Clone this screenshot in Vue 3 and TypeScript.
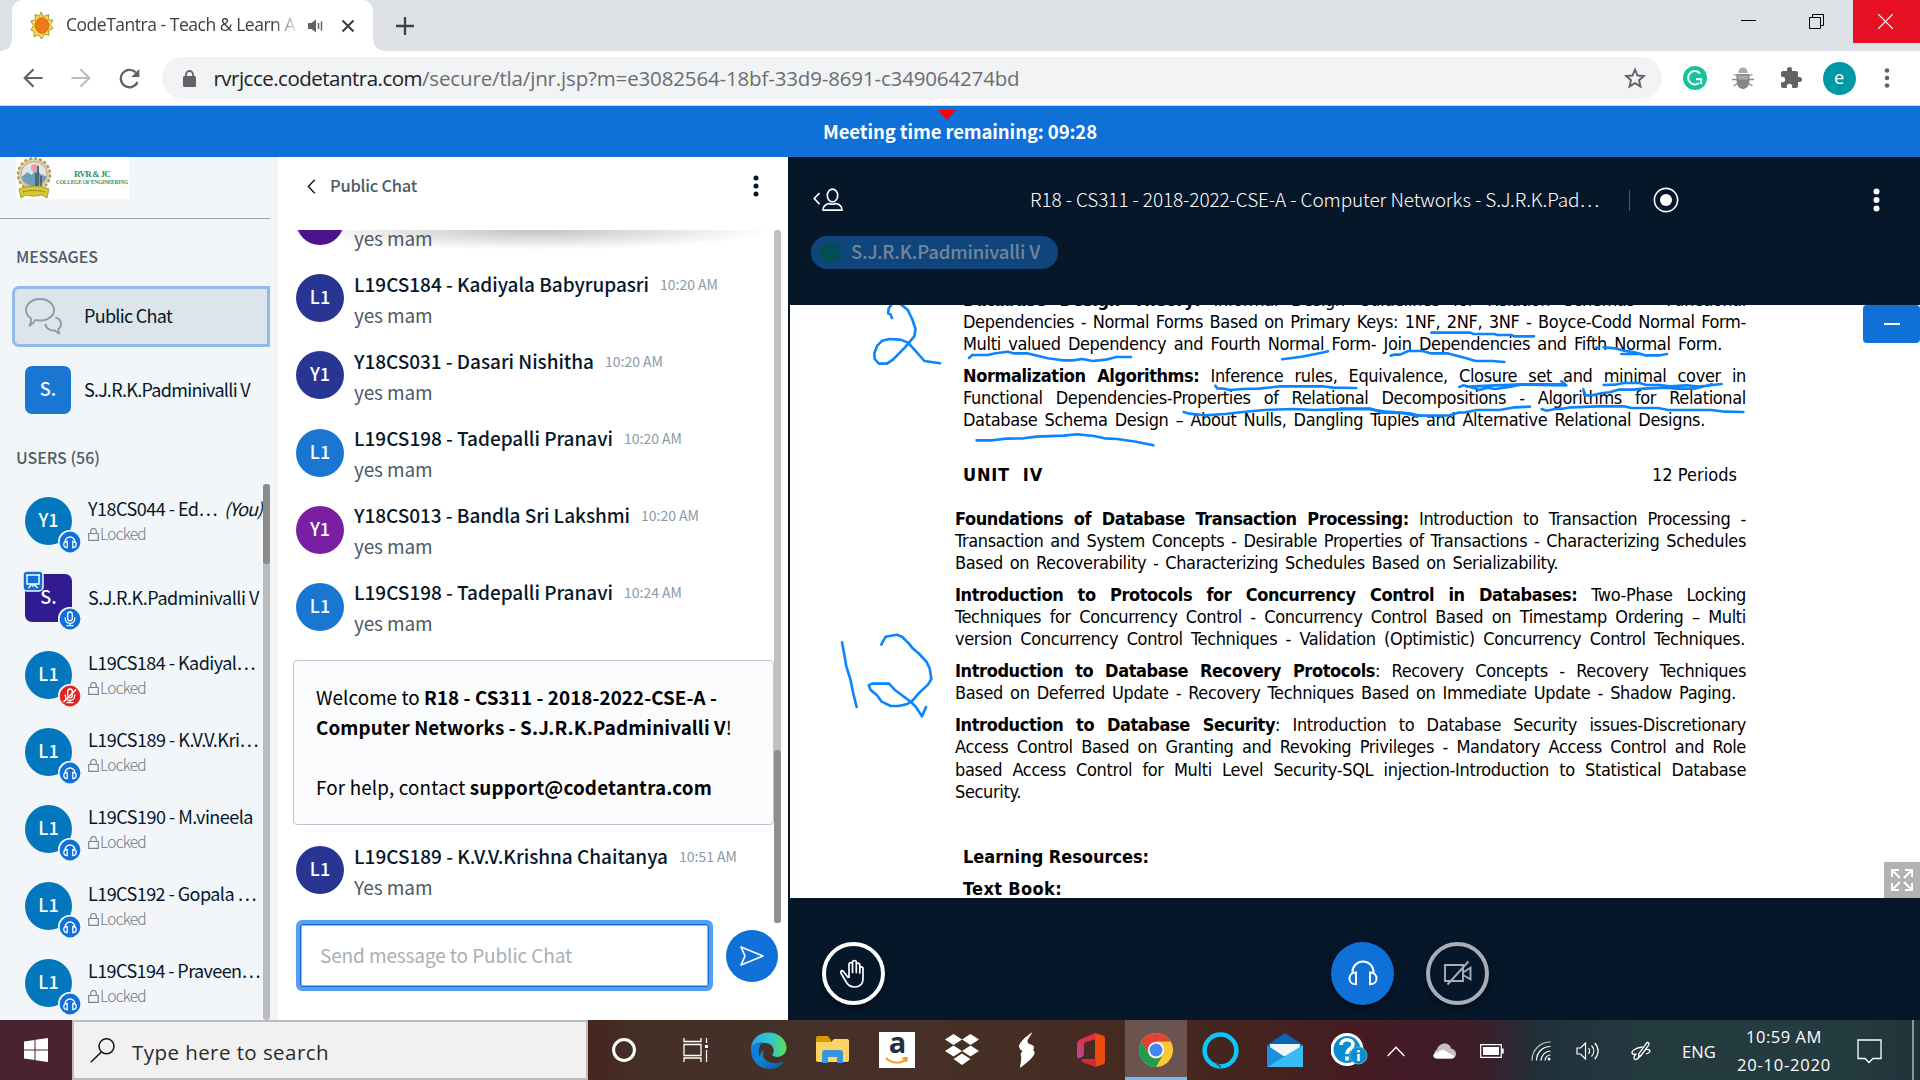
<script setup lang="ts">
interface User { initials: string; name: string; width: number; you?: boolean; square?: boolean; locked: boolean; status: 'headset' | 'mic' | 'muted' }
interface Message { initials: string; color: string; name: string; width: number; time: string; text: string }
interface Segment { t: string; b?: boolean }
interface DocLine { segs: Segment[]; width: number }

/* Spreads letters so a label takes the given width whatever face is installed. */
const vFit = {
  mounted(el: HTMLElement, binding: { value: number }) {
    const n = (el.textContent || '').trim().length
    const w = el.getBoundingClientRect().width
    const base = parseFloat(getComputedStyle(el).letterSpacing) || 0
    if (n && binding.value) el.style.letterSpacing = (base + (binding.value - w) / n).toFixed(4) + 'px'
  },
}
/* Justifies one document line through its word gaps. */
const vJustify = {
  mounted(el: HTMLElement, binding: { value: number }) {
    const gaps = (el.textContent || '').trim().split(' ').length - 1
    const w = el.getBoundingClientRect().width
    if (gaps > 0) el.style.wordSpacing = ((binding.value - w) / gaps).toFixed(4) + 'px'
  },
}

const users: User[] = [
  { initials: 'Y1', name: 'Y18CS044 - Ed…', width: 129, you: true, locked: true, status: 'headset' },
  { initials: 'S.', name: 'S.J.R.K.Padminivalli V', width: 171, square: true, locked: false, status: 'mic' },
  { initials: 'L1', name: 'L19CS184 - Kadiyal…', width: 167, locked: true, status: 'muted' },
  { initials: 'L1', name: 'L19CS189 - K.V.V.Kri…', width: 170, locked: true, status: 'headset' },
  { initials: 'L1', name: 'L19CS190 - M.vineela', width: 165, locked: true, status: 'headset' },
  { initials: 'L1', name: 'L19CS192 - Gopala …', width: 168, locked: true, status: 'headset' },
  { initials: 'L1', name: 'L19CS194 - Praveen…', width: 172, locked: true, status: 'headset' },
]

const messages: Message[] = [
  { initials: '', color: '#4a148c', name: '', width: 0, time: '', text: 'yes mam' },
  { initials: 'L1', color: '#283593', name: 'L19CS184 - Kadiyala Babyrupasri', width: 295, time: '10:20 AM', text: 'yes mam' },
  { initials: 'Y1', color: '#283593', name: 'Y18CS031 - Dasari Nishitha', width: 240, time: '10:20 AM', text: 'yes mam' },
  { initials: 'L1', color: '#1976d2', name: 'L19CS198 - Tadepalli Pranavi', width: 259, time: '10:20 AM', text: 'yes mam' },
  { initials: 'Y1', color: '#7b1fa2', name: 'Y18CS013 - Bandla Sri Lakshmi', width: 276, time: '10:20 AM', text: 'yes mam' },
  { initials: 'L1', color: '#1976d2', name: 'L19CS198 - Tadepalli Pranavi', width: 259, time: '10:24 AM', text: 'yes mam' },
]
const lastMessage: Message = { initials: 'L1', color: '#283593', name: 'L19CS189 - K.V.V.Krishna Chaitanya', width: 314, time: '10:51 AM', text: 'Yes mam' }

const line = (width: number, t: string, bold = ''): DocLine => ({ width, segs: bold ? [{ t: bold, b: true }, { t }] : [{ t }] })

const unitThree: DocLine[][] = [
  [
    line(783, ' Informal Design Guidelines for Relation Schemas - Functional', 'Database Design Theory:'),
    line(783, 'Dependencies - Normal Forms Based on Primary Keys: 1NF, 2NF, 3NF - Boyce-Codd Normal Form-'),
    line(759, 'Multi valued Dependency and Fourth Normal Form- Join Dependencies and Fifth Normal Form.'),
  ],
  [
    line(783, ' Inference rules, Equivalence, Closure set and minimal cover in', 'Normalization Algorithms:'),
    line(783, 'Functional Dependencies-Properties of Relational Decompositions - Algorithms for Relational'),
    line(742, 'Database Schema Design – About Nulls, Dangling Tuples and Alternative Relational Designs.'),
  ],
]
const unitFour: DocLine[][] = [
  [
    line(791, ' Introduction to Transaction Processing -', 'Foundations of Database Transaction Processing:'),
    line(791, 'Transaction and System Concepts - Desirable Properties of Transactions - Characterizing Schedules'),
    line(603, 'Based on Recoverability - Characterizing Schedules Based on Serializability.'),
  ],
  [
    line(791, ' Two-Phase Locking', 'Introduction to Protocols for Concurrency Control in Databases:'),
    line(791, 'Techniques for Concurrency Control - Concurrency Control Based on Timestamp Ordering – Multi'),
    line(790, 'version Concurrency Control Techniques - Validation (Optimistic) Concurrency Control Techniques.'),
  ],
  [
    line(791, ': Recovery Concepts - Recovery Techniques', 'Introduction to Database Recovery Protocols'),
    line(781, 'Based on Deferred Update - Recovery Techniques Based on Immediate Update - Shadow Paging.'),
  ],
  [
    line(791, ': Introduction to Database Security issues-Discretionary', 'Introduction to Database Security'),
    line(791, 'Access Control Based on Granting and Revoking Privileges - Mandatory Access Control and Role'),
    line(791, 'based Access Control for Multi Level Security-SQL injection-Introduction to Statistical Database'),
    line(69, 'Security.'),
  ],
]
</script>

<template>
  <div class="screen">
    <header class="tabstrip">
      <div class="tab">
        <svg class="favicon" width="24" height="30" viewBox="0 0 24 30">
          <path d="M11 1l2.600 4.500 5-2-.3 5.200 4.700.5-2.700 4.400 2.700 4-4.500 1.600.5 5-4.800-1-2.500 4.800-3.200-4.300-4.500 2 .2-5.200L1 19l2.500-4.300L.8 10l4.700-1.200L5 3.500l4.500 1.700z" fill="#f4dd55" stroke="#a88a1c" stroke-width=".9" />
          <ellipse cx="12" cy="14.500" rx="6.800" ry="7.800" fill="#ee7a17" stroke="#c9620e" stroke-width=".8" />
        </svg>
        <div class="tab-title"><span v-fit="229">CodeTantra - Teach &amp; Learn A</span></div>
        <svg class="sound" width="16" height="16" viewBox="0 0 16 16"><path d="M0 5h3.500L8 1.500v13L3.500 11H0z" fill="#5f6368" /><path d="M10.500 5v6M13.500 3.500v9" stroke="#5f6368" stroke-width="1.500" /></svg>
        <svg class="tab-close" width="14" height="14" viewBox="0 0 14 14"><path d="M1.500 1.500l11 11M12.500 1.500l-11 11" stroke="#3c4043" stroke-width="2.100" /></svg>
      </div>
      <svg class="plus" width="18" height="18" viewBox="0 0 18 18"><path d="M9 0v18M0 9h18" stroke="#3c4043" stroke-width="2.300" /></svg>
      <div class="win-controls">
        <svg width="15" height="15" viewBox="0 0 15 15"><path d="M0 6.500h15" stroke="#000" /></svg>
        <svg width="15" height="15" viewBox="0 0 15 15"><path d="M.5 3.500h11v11H.5zM3.500 3V.5h11v11H12" fill="none" stroke="#000" /></svg>
        <div class="win-close"><svg width="15" height="15" viewBox="0 0 15 15"><path d="M0 0l15 15M15 0L0 15" stroke="#fff" stroke-width="1.200" /></svg></div>
      </div>
    </header>

    <div class="toolbar">
      <svg class="nav-icon" width="20" height="20" viewBox="0 0 20 20"><path d="M19.500 10H2M10.500 1.300L1.800 10l8.700 8.700" fill="none" stroke="#5f6368" stroke-width="2.200" /></svg>
      <svg class="nav-icon" width="20" height="20" viewBox="0 0 20 20"><path d="M.5 10H18M9.500 1.300l8.700 8.700-8.700 8.700" fill="none" stroke="#babcbe" stroke-width="2.200" /></svg>
      <svg class="nav-icon reload" width="21" height="21" viewBox="0 0 21 21"><path d="M18.500 14A8.700 8.700 0 1 1 16.800 4.500" fill="none" stroke="#5f6368" stroke-width="2.300" /><path d="M20.300 1v8h-8z" fill="#5f6368" /></svg>
      <div class="omnibox">
        <svg width="13" height="17" viewBox="0 0 13 17"><rect y="6" width="13" height="11" rx="1.500" fill="#5f6368" /><path d="M3 7V4.500a3.500 3.500 0 0 1 7 0V7" fill="none" stroke="#5f6368" stroke-width="1.800" /></svg>
        <div class="url"><span v-fit="208.500" class="host">rvrjcce.codetantra.com</span><span v-fit="597.500">/secure/tla/jnr.jsp?m=e3082564-18bf-33d9-8691-c349064274bd</span></div>
        <svg class="star" width="22" height="22" viewBox="0 0 22 22"><path d="M11 2.600l2.500 5.900 6.400.5-4.900 4.200 1.500 6.200L11 16.100l-5.500 3.300L7 13.200 2.100 9l6.400-.5z" fill="none" stroke="#5f6368" stroke-width="1.900" /></svg>
      </div>
      <div class="extensions">
        <svg width="24" height="24" viewBox="0 0 24 24"><circle cx="12" cy="12" r="12" fill="#15c39a" /><path d="M17 7.500A6.700 6.700 0 1 0 16 17M13 13.300h5.200v5" fill="none" stroke="#fff" stroke-width="2" /></svg>
        <svg width="22" height="22" viewBox="0 0 22 22">
          <g fill="none" stroke="#8c8c8c" stroke-width="1.300"><path d="M6 9L1.500 7.500M6 12.500H0M6 16l-4.500 3M16 9l4.500-1.500M16 12.500h6M16 16l4.500 3" /></g>
          <path d="M6.500 5a4.500 4.500 0 0 1 9 0v1h-9z" fill="#aaa" /><path d="M4.500 7h13v6c0 5-2.500 9-6.500 9s-6.500-4-6.500-9z" fill="#858585" /><path d="M6 8.500h10v4H6z" fill="#a8a8a8" />
        </svg>
        <svg width="24" height="24" viewBox="0 0 24 24"><path d="M20.500 11H19V7c0-1.100-.9-2-2-2h-4V3.500a2.500 2.500 0 0 0-5 0V5H4c-1.100 0-2 .9-2 2v3.800h1.500a2.700 2.700 0 0 1 0 5.400H2V20c0 1.100.9 2 2 2h3.800v-1.500a2.700 2.700 0 0 1 5.400 0V22H17c1.100 0 2-.9 2-2v-4h1.500a2.500 2.500 0 0 0 0-5z" fill="#5f6368" /></svg>
        <div class="profile">e</div>
        <svg width="6" height="22" viewBox="0 0 6 22"><g fill="#5f6368"><circle cx="3" cy="3.500" r="2.300" /><circle cx="3" cy="11" r="2.300" /><circle cx="3" cy="18.500" r="2.300" /></g></svg>
      </div>
    </div>

    <div class="meeting-bar">
      <svg class="marker" width="18" height="10" viewBox="0 0 18 10"><path d="M0 0h18L9 10z" fill="#f00" /></svg>
      <span v-fit="274">Meeting time remaining: 09:28</span>
    </div>

    <main class="app">
      <aside class="sidebar">
        <div class="logo">
          <svg width="36" height="42" viewBox="0 0 36 42">
            <circle cx="18" cy="17.500" r="16" fill="#e6d5ab" stroke="#b39a62" stroke-width="2.500" stroke-dasharray="3 2" />
            <circle cx="18" cy="17.500" r="13" fill="#dce7ea" stroke="#b99f72" />
            <path d="M5.500 20l6-5 4 3 5-6 4 5 6 2.500a13 13 0 0 1-25 .5z" fill="#6f9fb8" />
            <circle cx="19" cy="11" r="4" fill="#eba0a0" /><path d="M22 9v20M20 29V16M25 29V19" stroke="#52606a" stroke-width="1.800" />
            <path d="M3 32c10-4 20-4 30 0l-2 9-5-3c-5 1.500-11 1.500-16 0l-5 3z" fill="#d6c92f" stroke="#8e841a" stroke-width=".7" />
            <path d="M7 35c7-2 15-2 22 0" stroke="#6f6916" fill="none" stroke-dasharray="1.500 1" />
          </svg>
          <div class="logo-text"><div class="l1"><span v-fit="36">RVR &amp; JC</span></div><div class="l2"><span v-fit="72">COLLEGE OF ENGINEERING</span></div></div>
        </div>
        <div class="rule"></div>
        <h2 class="messages-title"><span v-fit="82">MESSAGES</span></h2>
        <div class="public-chat">
          <svg width="37" height="37" viewBox="0 0 37 37"><g fill="none" stroke="#8b9aa8" stroke-width="1.900" stroke-linejoin="round"><path d="M6 20.500C2.800 18 1 15.300 1 12 1 6 7 1 15 1s14 5 14 11-6 10.500-14 10.500c-1.700 0-3-.2-4.500-.6C9 24.500 7 26.500 4.500 27.500 6 25.500 6.300 23 6 20.500z" /><path d="M30.500 19.500c3.500 1 5.500 3.500 5.500 6.500 0 2-1 4-2.800 5.300 0 1.700.4 3 1.300 4.200-2-.5-3.500-1.700-4.500-3-5 .8-9.500-2.500-9.500-6.500" /></g></svg>
          <span v-fit="88">Public Chat</span>
        </div>
        <div class="private-chat"><div class="avatar square blue">S.</div><span v-fit="166">S.J.R.K.Padminivalli V</span></div>
        <h2 class="users-title"><span v-fit="84">USERS (56)</span></h2>
        <div class="user-list">
          <div class="users">
            <div v-for="(u, i) in users" :key="i" class="user">
              <div class="avatar" :class="{ square: u.square, violet: u.square }">
                {{ u.initials }}
                <svg v-if="u.square" class="presenter" width="22" height="22" viewBox="0 0 22 22"><rect x="1" y="1" width="20" height="20" rx="4" fill="#0f70d7" stroke="#f3f6f9" stroke-width="1.500" /><g fill="none" stroke="#fff" stroke-width="1.400"><path d="M4 5h14M5 5v9h12V5M11 14v3M6.500 18l3-3.500M15.500 18l-3-3.500" /></g></svg>
                <svg class="status" width="24" height="24" viewBox="0 0 24 24">
                  <circle cx="12" cy="12" r="11.300" :fill="u.status === 'muted' ? '#df2721' : '#0f70d7'" stroke="#f3f6f9" stroke-width="1.800" />
                  <g fill="none" stroke="#fff" stroke-width="1.300">
                    <path v-if="u.status === 'headset'" d="M7 12.500V12a5 5 0 0 1 10 0v.5M9.200 11.500v6c-2 0-3.400-1.300-3.400-3s1.400-3 3.400-3zM14.800 11.500v6c2 0 3.400-1.300 3.400-3s-1.400-3-3.400-3z" />
                    <path v-else d="M12 5a2.300 2.300 0 0 0-2.300 2.300v4.200a2.300 2.300 0 0 0 4.600 0V7.300A2.300 2.300 0 0 0 12 5zM7.300 10.500v1.200a4.700 4.700 0 0 0 9.400 0v-1.200M12 16.400v2.300M8.500 18.700h7" />
                    <path v-if="u.status === 'muted'" d="M5.500 18L18 5.500" stroke-width="1.600" />
                  </g>
                </svg>
              </div>
              <div class="user-info">
                <div class="user-name"><span v-fit="u.width">{{ u.name }}</span><i v-if="u.you"><span v-fit="38">(You)</span></i></div>
                <div v-if="u.locked" class="locked"><svg width="11" height="13" viewBox="0 0 11 13"><path d="M.7 5.500h9.600v6.800H.7zM2.700 5.500V3.300a2.800 2.800 0 0 1 5.600 0v2.200" fill="none" stroke="#7a8792" stroke-width="1.200" /></svg><span v-fit="46">Locked</span></div>
              </div>
            </div>
          </div>
          <div class="scrollbar"><div class="thumb"></div></div>
        </div>
      </aside>

      <section class="chat">
        <div class="chat-head">
          <svg width="9" height="15" viewBox="0 0 9 15"><path d="M7.800 .8L1.300 7.500l6.500 6.700" fill="none" stroke="#06172a" stroke-width="1.400" /></svg>
          <span v-fit="87" class="chat-title">Public Chat</span>
          <svg class="chat-menu" width="6" height="22" viewBox="0 0 6 22"><g fill="#06172a"><circle cx="3" cy="3" r="2.500" /><circle cx="3" cy="11" r="2.500" /><circle cx="3" cy="19" r="2.500" /></g></svg>
        </div>
        <div class="chat-body">
          <div class="message-list">
            <div v-for="(m, i) in messages" :key="i" class="message">
              <div class="avatar" :style="{ background: m.color }">{{ m.initials }}</div>
              <div class="message-text">
                <div class="message-head"><span v-fit="m.width">{{ m.name }}</span><time v-if="m.time"><span v-fit="58">{{ m.time }}</span></time></div>
                <div class="message-body"><span v-fit="78.500">{{ m.text }}</span></div>
              </div>
            </div>
            <div class="welcome">
              <div><span v-fit="401">Welcome to <b>R18 - CS311 - 2018-2022-CSE-A -</b></span></div>
              <div><span v-fit="416"><b>Computer Networks - S.J.R.K.Padminivalli V</b>!</span></div>
              <div>&nbsp;</div>
              <div><span v-fit="396">For help, contact <b>support@codetantra.com</b></span></div>
            </div>
            <div class="message">
              <div class="avatar" :style="{ background: lastMessage.color }">{{ lastMessage.initials }}</div>
              <div class="message-text">
                <div class="message-head"><span v-fit="lastMessage.width">{{ lastMessage.name }}</span><time><span v-fit="58">{{ lastMessage.time }}</span></time></div>
                <div class="message-body"><span v-fit="78.500">{{ lastMessage.text }}</span></div>
              </div>
            </div>
          </div>
          <div class="scrollbar"><div class="thumb"></div></div>
        </div>
        <div class="composer">
          <div class="input"><span v-fit="252">Send message to Public Chat</span></div>
          <div class="send"><svg width="24" height="20" viewBox="0 0 24 20"><path d="M1 1l22 9L1 19l4-9z" fill="none" stroke="#fff" stroke-width="1.700" stroke-linejoin="round" /></svg></div>
        </div>
      </section>

      <section class="stage">
        <div class="stage-head">
          <svg class="toggle" width="31" height="24" viewBox="0 0 31 24"><g fill="none" stroke="#fff" stroke-width="1.700"><path d="M6.500 5L1.300 10.500l5.200 5.800" /><ellipse cx="19.500" cy="7.500" rx="5.200" ry="6.300" /><path d="M10 22.200c0-4.200 3-6.200 6.500-6.700 2 1 4 1 6 0 3.500.5 6.500 2.500 6.500 6.700z" /></g></svg>
          <div class="stage-title"><span v-fit="569">R18 - CS311 - 2018-2022-CSE-A - Computer Networks - S.J.R.K.Pad…</span></div>
          <div class="divider"></div>
          <svg class="record" width="26" height="26" viewBox="0 0 26 26"><circle cx="13" cy="13" r="11.600" fill="none" stroke="#fff" stroke-width="1.600" /><circle cx="13" cy="13" r="6" fill="#fff" /></svg>
          <svg class="stage-menu" width="7" height="24" viewBox="0 0 7 24"><g fill="#fff"><circle cx="3.500" cy="3.500" r="3" /><circle cx="3.500" cy="12" r="3" /><circle cx="3.500" cy="20.500" r="3" /></g></svg>
        </div>
        <div class="talking"><div class="talk-dot"></div><span v-fit="189">S.J.R.K.Padminivalli V</span></div>

        <div class="presentation">
          <div class="unit-three">
            <div v-for="(p, i) in unitThree" :key="i" class="para"><div v-for="(l, j) in p" :key="j" class="doc-line"><span v-justify="l.width"><template v-for="(s, k) in l.segs" :key="k"><b v-if="s.b">{{ s.t }}</b><template v-else>{{ s.t }}</template></template></span></div></div>
          </div>
          <div class="unit-title"><b v-fit="80">UNIT&nbsp; IV</b><span v-fit="85">12 Periods</span></div>
          <div class="unit-four">
            <div v-for="(p, i) in unitFour" :key="i" class="para"><div v-for="(l, j) in p" :key="j" class="doc-line"><span v-justify="l.width"><template v-for="(s, k) in l.segs" :key="k"><b v-if="s.b">{{ s.t }}</b><template v-else>{{ s.t }}</template></template></span></div></div>
          </div>
          <div class="resources"><div class="doc-line"><b v-fit="186">Learning Resources:</b></div><div class="doc-line text-book"><b v-fit="99">Text Book:</b></div></div>

          <svg class="ink" width="1130" height="593" viewBox="790 305 1130 593">
            <g transform="translate(780 100) scale(.42092 .33333)">
              <path d="M266 654l-3-10-6-4 1-14 7-13M288 614l15 15 11 28 8 30-3 22-22 33-28 36-15 13h-19l-10-14-1-17 7-23 12-15 17-5 26 2 18 9 18 25 21 30 37 7" />
              <path d="M449 774l8-9h36l19-5 29-5 13 5h33l20 6 29 9 36 6h25l21-4 25 6 31-4 25-8h35" />
              <path d="M1193 778l46-8 45-11 18-5" />
              <path d="M1034 857l5 8 16 1 14 4 30-3 40-1 50-7h100l25 4 55 1" />
              <path d="M959 936l14 5 35 5 50-4 42-6 50-6 70-3 50 3 50-2 80-1 40 8 56 5 28 8" />
              <path d="M467 1021h38l32-5 42-1 30-5 65-3 32-4 40 5 25 7 30 2 45 8 41 11" />
            </g>
            <g transform="translate(1340 290) scale(.33333)">
              <path d="M274 128h117l9 4h63l9 3h42l9 4h59M152 197l9-3h19l25-11h42l25 7h50l34 9 23 6 28 8h50l36 3" />
              <path d="M769 173h7M791 172l34 3 28 7 27 4 23 6h-59M903 192l12 4h45l21-4" />
              <path d="M358 291l12-5 34 9 14 5 24-7 23 4 47-7 30-6 60 1 77 1-15-12M380 290l160-7h125" stroke-width="3.600" />
              <path d="M791 285l35-1 25-5h48l20 6h40l31 4 50-3 35 4 70-8M730 298l4 16 15 3 35-7 25-3 26-8h45l30-3 70-3 28 3h55l53-13" />
              <path d="M0 356h92l35 12 60 1 42 8 100-1 25-8 22-1 35-7h68l45-8 46-2M605 357l15 5 25-5 22-1 25-4 80-3h80l22 5h80l31 6h130l40 5 55 1" />
            </g>
            <g transform="translate(780 600) scale(.33333)">
              <path d="M186 127l7 37 6 35 12 38 9 44 10 40M304 134l5-10 8-14 34-6 16 7 20 20 11 14 20 17 22 24 9 19 5 32-10 17-25 23-22 25-15 10-26 6h-24l-27-13-14-19-19-16-6-14 10-5h51l17 18 49 37 13 13 20 30 12-28" />
            </g>
          </svg>
          <div class="hide-btn"></div>
          <div class="fullscreen"><svg width="22" height="22" viewBox="0 0 22 22"><path d="M1 8V1h7M1.500 1.500L9 9M14 1h7v7M20.500 1.500L13 9M1 14v7h7M1.500 20.500L9 13M14 21h7v-7M20.500 20.500L13 13" fill="none" stroke="#fff" stroke-width="2" /></svg></div>
        </div>

        <div class="actions">
          <div class="round hand"><svg width="26" height="29" viewBox="0 0 26 29"><path d="M8.500 19l-5-6.500c-1.800-1.800-3.500.2-2.300 2l5.300 9c2 3.200 4 4.500 8 4.500 5 0 8.500-3 8.500-8V9.500c0-2.300-3.200-2.300-3.200 0V14 6c0-2.500-3.500-2.500-3.500 0v7.500-10c0-2.700-3.800-2.700-3.800 0v10-8c0-2.500-3.500-2.500-3.500 0V19" fill="none" stroke="#fff" stroke-width="1.700" stroke-linejoin="round" /></svg></div>
          <div class="round headset"><svg width="30" height="26" viewBox="0 0 30 26"><g fill="none" stroke="#fff" stroke-width="2"><path d="M4.500 14v-2a10.500 10.500 0 0 1 21 0v2" /><path d="M8 12.500v11.800c-4 0-6.500-2.500-6.500-5.900S4 12.500 8 12.500zM22 12.500v11.800c4 0 6.500-2.500 6.500-5.900s-2.500-5.900-6.500-5.900z" /></g></svg></div>
          <div class="round camera"><svg width="30" height="26" viewBox="0 0 30 26"><g fill="none" stroke="#a7aeb6" stroke-width="1.900"><path d="M2 5h18v16H2zM20 12.500l7.500-4.800v11.600L20 15M4.500 24.500L25.500 1.500" /></g></svg></div>
        </div>
      </section>
    </main>

    <footer class="taskbar">
      <div class="start"><svg width="24" height="24" viewBox="0 0 24 24"><path d="M0 3.500l10.500-1.600v9.600H0zM11.500 1.700L24 0v11.500H11.500zM0 12.500h10.500v9.600L0 20.500zM11.500 12.500H24V24l-12.500-1.700z" fill="#fff" /></svg></div>
      <div class="search">
        <svg width="25" height="25" viewBox="0 0 25 25"><ellipse cx="16.500" cy="8.300" rx="7.500" ry="7.500" fill="none" stroke="#1b1b1b" stroke-width="1.600" /><path d="M11.300 14L.8 24.300" stroke="#1b1b1b" stroke-width="1.600" /></svg>
        <span v-fit="197">Type here to search</span>
      </div>
      <div class="task wide"><svg width="24" height="24" viewBox="0 0 24 24"><circle cx="12" cy="12" r="10.400" fill="none" stroke="#fff" stroke-width="3" /></svg></div>
      <div class="task wide"><svg width="26" height="24" viewBox="0 0 26 24"><g fill="none" stroke="#fff" stroke-width="1.300"><path d="M1 0v3.500h17V0M1 6.500h17v11H1zM1 24v-4h17v4M23.500 0v5M23.500 12v12" /></g><path d="M22 7h3v3h-3z" fill="#fff" /></svg></div>
      <div class="task first">
        <svg width="37" height="37" viewBox="0 0 37 37"><defs><linearGradient id="edgeTop" x1="0" x2="1"><stop offset="0" stop-color="#2aa9e6" /><stop offset=".55" stop-color="#30c6d0" /><stop offset="1" stop-color="#5fe052" /></linearGradient><linearGradient id="edgeLow" x1="0" x2="1" y1="0" y2="1"><stop offset="0" stop-color="#1590df" /><stop offset="1" stop-color="#0c59a4" /></linearGradient></defs><path d="M1 16C2 6 10 .5 18.500 .5 29 .5 36.500 8 36.500 15.500c0 6-4.500 9.500-9.500 9.500-3.500 0-5.500-1.500-4-3.500C25 18 23 11 15 11 8 11 2.500 14 1 16z" fill="url(#edgeTop)" /><path d="M1 16c1-3.500 5.500-6 12-6-7 5-6 20 8.500 26.500C10 38 0 29 1 16z" fill="#0f7fd8" /><path d="M14 18c-5 9 6 16 19.500 12-4 6-10 7.500-15 6.500C8 33 8 21 14 18z" fill="url(#edgeLow)" /></svg>
      </div>
      <div class="task"><svg width="33" height="28" viewBox="0 0 33 28"><path d="M0 2c0-1 .5-2 2-2h10l3 4v6H0z" fill="#d99a00" /><path d="M0 6h15l3-3h13c1.500 0 2 1 2 2v19c0 1-.5 2-2 2H2c-1.500 0-2-1-2-2z" fill="#fcd464" /><path d="M6 27V17c0-2 1-3 3-3h15c2 0 3 1 3 3v10h-6v-6h-9v6z" fill="#3996dc" /></svg></div>
      <div class="task"><div class="amazon"><span>a</span><svg width="24" height="8" viewBox="0 0 24 8"><path d="M1 1c6 6 15 6 20 1M17.500 1.500L22 .8 21 5" fill="none" stroke="#f79a1e" stroke-width="1.900" /></svg></div></div>
      <div class="task"><svg width="36" height="32" viewBox="0 0 34 32"><path d="M8.500 0L17 5.500 8.500 11 0 5.500zM25.500 0L34 5.500 25.500 11 17 5.500zM8.500 11.500L17 17l-8.500 5.500L0 17zM25.500 11.500L34 17l-8.500 5.500L17 17zM17 19.500l8.500 5.500-8.500 6-8.500-6z" fill="#fff" /></svg></div>
      <div class="task"><svg width="20" height="36" viewBox="0 0 20 36"><path d="M15.500 0C8 5 2 11 2 14.500c0 4 7 5 6.500 10.500C12 22 17.500 18 17 15c-.5-3-7-2-6.500-6C10.700 7 14 3.500 15.500 0zM8.500 15c0 5-6 3.500-4.500 9 .7 2-.5 8-1 12 8-6 15.500-12 14.500-16.500C17 17 9.500 18 8.500 15z" fill="#fff" /></svg></div>
      <div class="task"><svg width="28" height="34" viewBox="0 0 28 34"><defs><linearGradient id="office" x1="0" x2="1" y1="1" y2="0"><stop offset="0" stop-color="#b04aa8" /><stop offset=".6" stop-color="#e0303a" /></linearGradient></defs><path d="M18 0L3 6.500C1 7.500 0 9 0 11v13c0 1.500 2 1.500 4 .500 2-1 3-2 3-4V12c0-1.500.5-2.500 2-3l10-3z" fill="url(#office)" /><path d="M18 0l8 2.500c1.300.5 2 1.500 2 3v23c0 1.500-.7 2.500-2 3L18 34V0z" fill="#ea4a0b" /><path d="M6 26h13v8L6 29.500c-2-1-2-3.500 0-3.500z" fill="#d32a3a" /></svg></div>
      <div class="task active"><svg width="34" height="34" viewBox="0 0 34 34"><circle cx="17" cy="17" r="17" fill="#fcc934" /><path d="M2.300 8.500A17 17 0 0 1 31.700 8.500H17L9.600 21z" fill="#e34133" /><path d="M2.300 8.500A17 17 0 0 0 17 34l7.400-12.700A8.500 8.500 0 0 1 9.600 21z" fill="#1e9c50" /><circle cx="17" cy="17" r="8" fill="#fff" /><circle cx="17" cy="17" r="6.500" fill="#4285f4" /></svg></div>
      <div class="task"><svg width="37" height="37" viewBox="0 0 37 37"><circle cx="18.500" cy="18.500" r="15.900" fill="none" stroke="#08c8fb" stroke-width="4.500" /><path d="M14.500 32c2 .5 3.500 1.700 4.300 4" fill="none" stroke="#2c5a68" stroke-width="1.300" /></svg></div>
      <div class="task"><svg width="36" height="34" viewBox="0 0 36 34"><path d="M0 12L18 0l18 12v10H0z" fill="#0864b5" /><path d="M3 11h30v12H3z" fill="#f2f6fa" /><path d="M0 12l18 12L0 34z" fill="#1b8fdd" /><path d="M36 12L0 34h36z" fill="#38bdf2" /></svg></div>
      <div class="task"><svg width="37" height="34" viewBox="0 0 37 34"><circle cx="16" cy="16.500" r="16.500" fill="#fff" /><circle cx="16" cy="16.500" r="13.500" fill="#098ed0" /><path d="M10 12c0-7 12-7 12-.5 0 4.500-6 4-6 9.500M16 23.500v4" fill="none" stroke="#fff" stroke-width="3.600" /><circle cx="27.500" cy="22.500" r="8.500" fill="#0a8dcd" stroke="#4fb5e4" /><path d="M27.500 21v7M27.500 17v2.500" stroke="#fff" stroke-width="2.500" /></svg></div>
      <div class="tray w34 caret"><svg width="18" height="11" viewBox="0 0 18 11"><path d="M.7 10L9 1.200 17.300 10" fill="none" stroke="#fff" stroke-width="1.400" /></svg></div>
      <div class="tray w62"><svg width="24" height="16" viewBox="0 0 24 16"><path d="M5 15.500a5 5 0 0 1 0-9C6 3 9 .5 12.500 .5c3.500 0 6 2 6.500 5 3 .5 5 2.500 5 5.500 0 2.500-2 4.500-4.500 4.500z" fill="#c9bdc0" /><path d="M4.500 15.500C1 15 0 12 3 10.500l8-4 12 7c-.7 1.300-2 2-3.500 2z" fill="#fff" /></svg></div>
      <div class="tray w34"><svg width="24" height="14" viewBox="0 0 24 14"><path d="M.7 .7h20.600v12.600H.7z" fill="none" stroke="#fff" stroke-width="1.200" /><path d="M3 3h16v8H3zM22 4.500h1.700v5H22z" fill="#fff" /></svg></div>
      <div class="tray w64"><svg width="20" height="20" viewBox="0 0 20 20"><g fill="none" stroke="#fff" stroke-width="1.200"><path d="M1 19.500C1 9 9 1 19.500 1" opacity=".75" /><path d="M5.500 19.500C5.500 11.500 11.500 5.500 19.500 5.500M10 19.500c0-5 4.500-9.500 9.500-9.500M14 19.500c0-3 2.500-5.500 5.500-5.500" /></g><circle cx="18" cy="18" r="1.500" fill="#fff" /></svg></div>
      <div class="tray speaker"><svg width="24" height="18" viewBox="0 0 24 18"><g fill="none" stroke="#fff" stroke-width="1.200"><path d="M1 6h3.500L9.500 1v16l-5-5H1zM12.500 6c1.500 2 1.500 4 0 6M15.500 3.500c3 3.300 3 7.700 0 11M18.700 1c4.500 4.700 4.500 11.300 0 16" /></g></svg></div>
      <div class="tray pen"><svg width="21" height="20" viewBox="0 0 21 20"><g fill="none" stroke="#fff" stroke-width="1.300" stroke-linejoin="round"><path d="M17.500 1.500c1.500 0 2 1.500 1 2.800L11 14.500l-2.500 1.200.3-2.900 7.500-10.500c.3-.5.7-.8 1.200-.8z" /><path d="M12.500 6C7 6.500 1.500 9.500 2 12c.3 1.500 2.500 1.500 4.500 1M6.500 13C3 15 3.500 19 6 18.500c2.500-.5 3.500-3 5-4M15.500 8.500c3-.5 5.500.5 4 2.500-.7 1-2 1.500-3.500 2" /></g></svg></div>
      <div class="tray w68"><span v-fit="34">ENG</span></div>
      <div class="clock"><div><span v-fit="76">10:59 AM</span></div><div><span v-fit="94">20-10-2020</span></div></div>
      <div class="tray w70"><svg width="26" height="25" viewBox="0 0 26 25"><path d="M1 1h23v18.500h-8l-4 4-4-4H1z" fill="none" stroke="#fff" stroke-width="1.300" /></svg></div>
      <div class="desktop-edge"></div>
    </footer>
  </div>
</template>

<style>
html, body { margin: 0; overflow: hidden; }
</style>

<style scoped>
* { box-sizing: border-box; }
svg { display: block; flex: none; }
span { display: inline-block; white-space: nowrap; }
.screen { width: 1920px; height: 1080px; display: flex; flex-direction: column; overflow: hidden; background: #fff; font-family: "Noto Sans CJK SC", "Noto Sans", sans-serif; color: #06172a; }

.tabstrip { height: 51px; flex: none; display: flex; align-items: center; background: #dee1e6; padding-left: 12px; font-family: "Open Sans", "Noto Sans", sans-serif; }
.tab { position: relative; width: 361px; height: 51px; background: #fff; border-radius: 11px 11px 0 0; display: flex; align-items: center; padding-left: 18px; }
.tab::before, .tab::after { content: ""; position: absolute; bottom: 0; width: 11px; height: 11px; }
.tab::before { left: -11px; background: radial-gradient(circle at 0 0, transparent 10.500px, #fff 11px); }
.tab::after { right: -11px; background: radial-gradient(circle at 100% 0, transparent 10.500px, #fff 11px); }
.tab-title { width: 230px; margin: -2px 0 0 12px; font-size: 17.500px; line-height: 49px; color: #3c4043; overflow: hidden; -webkit-mask-image: linear-gradient(90deg, #000 90%, transparent 102%); mask-image: linear-gradient(90deg, #000 90%, transparent 102%); }
.sound { margin-left: 12px; }
.tab-close { margin-left: 17px; }
.plus { margin-left: 23px; }
.win-controls { margin-left: auto; align-self: flex-start; height: 43px; display: flex; align-items: center; }
.win-controls > svg { margin-right: 53px; }
.win-controls > svg + svg { margin-right: 29px; }
.win-close { width: 67px; height: 43px; background: #e81123; display: flex; align-items: center; padding-left: 25px; }

.toolbar { height: 55px; flex: none; display: flex; align-items: center; padding: 0 9px 0 23px; border-bottom: 1px solid #d3d6da; font-family: "Open Sans", "Noto Sans", sans-serif; }
.nav-icon { margin-right: 28px; }
.reload { margin-right: 22px; }
.omnibox { width: 1500px; height: 42px; border-radius: 21px; background: #f1f3f4; display: flex; align-items: center; padding: 0 16px 0 21px; }
.url { flex: 1; margin-left: 17.500px; font-size: 20.500px; line-height: 42px; color: #6a6e72; white-space: nowrap; }
.url .host { color: #202124; }
.extensions { margin-left: 9px; display: flex; align-items: center; }
.extensions > * { width: 48px; }
.extensions .profile { width: 33px; height: 33px; margin: 0 7.500px; border-radius: 50%; background: #0097a7; color: #fff; font-size: 18px; line-height: 31px; text-align: center; }

.meeting-bar { position: relative; height: 51px; flex: none; background: #0f70d7; color: #fff; font-weight: 700; font-size: 18.500px; line-height: 50px; text-align: center; }
.marker { position: absolute; left: 938px; top: 4px; }

.app { flex: none; height: 863px; display: flex; }
.avatar { position: relative; width: 47px; height: 48px; flex: none; border-radius: 50%; background: #0277bd; color: #fff; font-size: 18px; font-weight: 500; line-height: 45px; text-align: center; }
.avatar.square { border-radius: 7px; }
.avatar.blue { background: #1976d2; width: 46px; }
.avatar.violet { background: #311b92; }

.sidebar { width: 278px; flex: none; background: #f3f6f9; display: flex; flex-direction: column; overflow: hidden; }
.logo { width: 113px; height: 42px; margin-left: 16px; background: #fff; display: flex; flex: none; }
.logo-text { width: 77px; padding: 12px 0 0 3px; text-align: center; font-family: "Liberation Serif", serif; font-weight: 700; color: #35936a; white-space: nowrap; }
.l1 { font-size: 9px; line-height: 11px; }
.l2 { font-size: 5.500px; line-height: 5px; }
.rule { width: 270px; height: 1px; margin-top: 19px; background: #94a6b8; flex: none; }
h2 { margin: 0; padding-left: 16px; font-size: 16px; font-weight: 500; line-height: 30px; color: #4e5a66; flex: none; }
.messages-title { margin-top: 22px; }
.public-chat { width: 258px; height: 61px; margin: 15px 0 0 12px; flex: none; border: 3px solid #8fbaea; border-radius: 7px 0 0 7px; background: #dce4ec; display: flex; align-items: center; padding-left: 10px; font-size: 18px; line-height: 27px; }
.public-chat span { margin: -3px 0 0 22px; }
.private-chat { display: flex; align-items: center; margin: 19px 0 0 25px; flex: none; font-size: 18px; line-height: 27px; }
.private-chat > span { margin: -2px 0 0 13px; }
.users-title { margin-top: 28px; }
.user-list { flex: 1; min-height: 0; margin-top: 12px; display: flex; }
.users { width: 263px; padding: 12.500px 0 0 25px; overflow: hidden; }
.user { height: 77px; display: flex; }
.status { position: absolute; left: 33px; top: 33px; }
.presenter { position: absolute; left: -3px; top: -4px; }
.user-info { width: 174px; margin-left: 16px; height: 50px; display: flex; flex-direction: column; justify-content: center; margin-top: -2px; flex: none; }
.user-name { font-size: 18px; line-height: 26px; display: flex; justify-content: space-between; white-space: nowrap; }
.locked { display: flex; align-items: center; font-size: 15.500px; font-weight: 300; line-height: 24px; color: #6b7986; gap: 1px; }
.locked svg { margin-top: 3px; }
.scrollbar { width: 7px; background: #b9bbbf; border-radius: 3px; flex: none; }
.user-list .thumb { height: 80px; border-radius: 3px; background: #8b8b8b; }

.chat { width: 510px; flex: none; background: #fff; display: flex; flex-direction: column; }
.chat-head { height: 73px; flex: none; display: flex; align-items: center; padding: 0 29px 14px 29px; }
.chat-title { margin: -3px 0 0 14px; font-size: 16.500px; font-weight: 500; line-height: 24px; color: #4e5a66; }
.chat-menu { margin: -2px 0 0 auto; }
.chat-body { height: 693px; flex: none; display: flex; padding-left: 15px; }
.message-list { width: 481px; flex: none; overflow: hidden; background: radial-gradient(farthest-side at 50% 0, rgba(0, 0, 0, .24), transparent) 50% 0 / 470px 20px no-repeat; }
.message-list .message:first-child { margin-top: -33px; }
.message { height: 77.200px; padding-left: 3px; display: flex; }
.message .avatar { width: 48px; }
.message-text { margin: -6.500px 0 0 10px; line-height: 31px; font-size: 19px; }
.message-head { height: 31px; font-weight: 500; display: flex; white-space: nowrap; }
.message-head time { margin-left: 11px; font-size: 14px; font-weight: 400; color: #8b9aa8; line-height: 33px; }
.message-body { height: 31px; color: #4e5a66; }
.welcome { height: 165px; margin: 0 0 21px; border: 1px solid #bdc6d0; border-radius: 4px; background: #fafbfd; padding: 20.500px 0 0 22px; font-size: 18.800px; line-height: 30px; color: #000; }
.chat-body .scrollbar { background: #c0c0c0; display: flex; align-items: flex-end; }
.chat-body .thumb { width: 7px; height: 173px; border-radius: 3px; background: #8f8f8f; }
.composer { display: flex; align-items: center; margin: -3px 0 0 18px; }
.input { width: 417px; height: 71px; border: 4px solid #559ff2; border-radius: 6px; padding-left: 20px; font-size: 19px; line-height: 61px; color: #a7afb7; box-shadow: inset 0 0 0 1.500px #1670d2; }
.send { width: 52px; height: 52px; margin-left: 13px; border-radius: 50%; background: #0f70d7; display: flex; align-items: center; justify-content: center; }

.stage { width: 1132px; background: #06172a; display: flex; flex-direction: column; padding-left: 2px; }
.stage-head { height: 60px; margin-top: 13px; flex: none; display: flex; align-items: center; padding-left: 23px; color: #fff; }
.stage-title { width: 569px; margin: -3px 0 0 186px; font-size: 19px; font-weight: 300; line-height: 30px; }
.divider { width: 1px; height: 21px; margin-left: 30px; background: #4d5866; }
.record { margin-left: 23px; }
.stage-menu { margin-left: auto; margin-right: 40px; }
.talking { width: 247px; height: 33px; margin: 6px 0 0 21px; flex: none; border-radius: 16px; background: #10457c; display: flex; align-items: center; padding-left: 8px; font-size: 18.500px; font-weight: 500; line-height: 30px; color: #738699; }
.talk-dot { width: 21px; height: 21px; border-radius: 50%; background: #024e55; margin-right: 11px; }
.talking span { margin-top: -4px; }

.presentation { position: relative; height: 593px; margin-top: 36px; flex: none; background: #fff; overflow: hidden; color: #000; font-family: "DejaVu Sans Condensed", "DejaVu Sans", sans-serif; font-stretch: condensed; font-size: 18px; }
.doc-line { height: 22.150px; line-height: 22px; letter-spacing: -.35px; white-space: nowrap; }
.doc-line b { letter-spacing: -.4px; }
.unit-three { margin: -16px 0 0 173px; }
.para { margin-bottom: 9.700px; }
.unit-title { display: flex; justify-content: space-between; width: 774px; margin: 32.500px 0 0 173px; line-height: 22px; letter-spacing: -.3px; }
.unit-four { margin: 22px 0 0 165px; }
.resources { margin: 43px 0 0 173px; }
.text-book { margin-top: 10px; }
.ink { position: absolute; left: 0; top: 0; }
.ink path { fill: none; stroke: #0a84ff; stroke-width: 2.600; stroke-linecap: round; stroke-linejoin: round; vector-effect: non-scaling-stroke; }
.hide-btn { position: absolute; right: 0; top: 0; width: 57px; height: 38px; border-radius: 4px; background: #0f70d7; }
.hide-btn::after { content: ""; position: absolute; left: 21px; top: 18px; width: 16px; height: 1.500px; background: #fff; }
.fullscreen { position: absolute; right: 0; bottom: 0; width: 36px; height: 36px; background: #b2b2b2; display: flex; align-items: center; justify-content: center; }

.actions { flex: 1; display: flex; align-items: center; padding: 28px 0 0 31.500px; }
.round { width: 63px; height: 63px; border-radius: 50%; display: flex; align-items: center; justify-content: center; box-shadow: 0 3px 6px rgba(0, 0, 0, .5); }
.hand { border: 4px solid #fff; }
.headset { margin-left: 446.500px; background: #0f70d7; }
.camera { margin-left: 32px; border: 4px solid #a7aeb6; }

.taskbar { height: 60px; flex: none; display: flex; color: #fff; font-family: "Open Sans", "Noto Sans", sans-serif; background: linear-gradient(90deg, #4a2230 0, #4a2230 72px, #46241f 588px, #443027 640px, #46302a 830px, #463026 960px, #45271f 1200px, #451d1f 1340px, #431a26 1400px, #3b1e2a 1480px, #20303a 1540px, #233a3f 1640px, #243b40 1850px, #20343a 1920px); }
.start { width: 72px; display: flex; align-items: center; padding-left: 24px; }
.search { width: 516px; background: #f1f1f1; border: 2px solid #bcbcbc; display: flex; align-items: center; padding-left: 16px; font-size: 20.500px; line-height: 54px; color: #2a2a2a; }
.search span { margin: 3px 0 0 17px; }
.task { width: 64.600px; display: flex; align-items: center; justify-content: center; flex: none; }
.task.wide { width: 72px; }
.task.first { margin-left: 4px; }
.task.active { width: 62px; margin: 0 1.300px; background: #6b544f; border-bottom: 3px solid #76b9ed; padding-top: 3px; }
.amazon { width: 36px; height: 36px; background: #fff; display: flex; flex-direction: column; align-items: center; color: #232f3e; font-weight: 700; font-size: 29px; }
.amazon span { height: 25px; line-height: 19px; }
.tray { display: flex; align-items: center; justify-content: center; flex: none; font-size: 16.500px; padding-top: 2px; }
.caret { margin-left: -3px; }
.speaker { width: 30px; }
.pen { width: 62px; }
.w34 { width: 34px; }
.w62 { width: 62px; }
.w64 { width: 64px; }
.w68 { width: 68px; }
.w70 { width: 70px; }
.pen svg { margin-left: 14px; }
.clock { width: 102px; flex: none; text-align: center; font-size: 16.500px; line-height: 28px; padding-top: 3px; }
.desktop-edge { width: 2px; margin-left: 7px; background: #8a9597; }
</style>
